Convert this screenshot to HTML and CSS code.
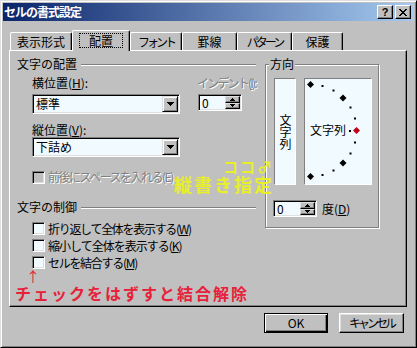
FILE: index.html
```html
<!DOCTYPE html>
<html lang="ja">
<head>
<meta charset="utf-8">
<title>セルの書式設定</title>
<link rel="stylesheet" href="styles.css">
</head>
<body>
<div class="window">
  <div class="titlebar">
    <span class="title">セルの書式設定</span>
    <div class="tbtns">
      <span class="tbtn help">?</span>
      <span class="tbtn close"><svg width="8" height="7" viewBox="0 0 8 7" shape-rendering="crispEdges"><path d="M0 0h2v1H0zM6 0h2v1H6zM1 1h2v1H1zM5 1h2v1H5zM2 2h4v1H2zM3 3h2v1H3zM2 4h4v1H2zM1 5h2v1H1zM5 5h2v1H5zM0 6h2v1H0zM6 6h2v1H6z" fill="#000"/></svg></span>
    </div>
  </div>
  <div class="content">
    <div class="tabs">
      <div class="tab t1">表示形式</div>
      <div class="tab t2 sel"><span class="focus">配置</span></div>
      <div class="tab t3"><span class="n-kana">フォント</span></div>
      <div class="tab t4">罫線</div>
      <div class="tab t5"><span class="n-kana">パターン</span></div>
      <div class="tab t6">保護</div>
    </div>
    <div class="panel">
      <div class="col-left">
        <div class="hdr"><span>文字の配置</span><span class="rule"></span></div>
        <div class="pos-row">
          <div class="pos-main">
            <div class="lbl">横位置(<u>H</u>):</div>
            <div class="combo"><span class="val">標準</span><span class="dd"><svg width="7" height="4" viewBox="0 0 7 4" shape-rendering="crispEdges"><path d="M0 0h7v1H0zM1 1h5v1H1zM2 2h3v1H2zM3 3h1v1H3z" fill="#000"/></svg></span></div>
          </div>
          <div class="pos-indent">
            <div class="lbl disabled n-indent">インデント(<u>I</u>):</div>
            <div class="spin indent"><span class="val">0</span><span class="sbtns"><span class="sbtn"><svg width="5" height="3" viewBox="0 0 5 3" shape-rendering="crispEdges"><path d="M2 0h1v1H2zM1 1h3v1H1zM0 2h5v1H0z" fill="#000"/></svg></span><span class="sbtn"><svg width="5" height="3" viewBox="0 0 5 3" shape-rendering="crispEdges"><path d="M0 0h5v1H0zM1 1h3v1H1zM2 2h1v1H2z" fill="#000"/></svg></span></span></div>
          </div>
        </div>
        <div class="lbl vlbl">縦位置(<u>V</u>):</div>
        <div class="combo vcombo"><span class="val">下詰め</span><span class="dd"><svg width="7" height="4" viewBox="0 0 7 4" shape-rendering="crispEdges"><path d="M0 0h7v1H0zM1 1h5v1H1zM2 2h3v1H2zM3 3h1v1H3z" fill="#000"/></svg></span></div>
        <div class="chk dis"><span class="box"></span><span class="disabled n-space">前後にスペースを入れる(E)</span></div>
        <div class="hdr hdr2"><span>文字の制御</span><span class="rule"></span></div>
        <div class="chks">
          <div class="chk"><span class="box"></span><span class="n-wrap">折り返して全体を表示する(<u>W</u>)</span></div>
          <div class="chk"><span class="box"></span><span class="n-shrink">縮小して全体を表示する(<u>K</u>)</span></div>
          <div class="chk"><span class="box"></span><span class="n-wrap">セルを結合する(<u>M</u>)</span></div>
        </div>
        <div class="arrow">↑</div>
        <div class="note-red">チェックをはずすと結合解除</div>
      </div>
      <div class="group">
        <span class="glabel">方向</span>
        <div class="orient">
          <div class="vbox"><span class="vtext">文字列</span></div>
          <div class="dial">
            <svg width="66" height="105" viewBox="0 0 66 105">
              <g fill="#000">
                <polygon points="5.5,2 9,5.5 5.5,9 2,5.5"/>
                <rect x="16.5" y="6" width="2" height="2"/>
                <rect x="27.5" y="10.5" width="2" height="2"/>
                <polygon points="38,15.5 41.5,19 38,22.5 34.5,19"/>
                <rect x="44.5" y="27.5" width="2" height="2"/>
                <rect x="49" y="38.5" width="2" height="2"/>
                <rect x="44" y="51" width="2" height="2"/>
                <rect x="49" y="62.5" width="2" height="2"/>
                <rect x="44.5" y="73.5" width="2" height="2"/>
                <polygon points="38,80.5 41.5,84 38,87.5 34.5,84"/>
                <rect x="27.5" y="90.5" width="2" height="2"/>
                <rect x="16.5" y="95" width="2" height="2"/>
                <polygon points="5.5,94 9,97.5 5.5,101 2,97.5"/>
              </g>
              <polygon points="51.5,48 55,51.5 51.5,55 48,51.5" fill="#c00018"/>
              <text x="5" y="56" font-family="Noto Sans CJK JP, sans-serif" font-size="12" fill="#000">文字列</text>
            </svg>
          </div>
        </div>
        <div class="deg">
          <div class="spin"><span class="val">0</span><span class="sbtns"><span class="sbtn"><svg width="5" height="3" viewBox="0 0 5 3" shape-rendering="crispEdges"><path d="M2 0h1v1H2zM1 1h3v1H1zM0 2h5v1H0z" fill="#000"/></svg></span><span class="sbtn"><svg width="5" height="3" viewBox="0 0 5 3" shape-rendering="crispEdges"><path d="M0 0h5v1H0zM1 1h3v1H1zM2 2h1v1H2z" fill="#000"/></svg></span></span></div>
          <span class="deg-lbl">度(<u>D</u>)</span>
        </div>
      </div>
    </div>
    <div class="actions">
      <div class="btn ok">OK</div>
      <div class="btn cancel"><span class="n-kana">キャンセル</span></div>
    </div>
  </div>
  <div class="note-yellow">
    <span class="koko">ココ♂</span>
    <span class="tate">縦書き指定</span>
  </div>
</div>
</body>
</html>
```
FILE: styles.css
```css
* { box-sizing: border-box; }
html, body { margin: 0; padding: 0; }
body {
  width: 417px;
  height: 348px;
  overflow: hidden;
  background: #c0c0c0;
  font-family: "Noto Sans CJK JP", "Noto Sans", sans-serif;
  font-size: 12px;
  line-height: 14px;
  color: #000;
}
u { text-underline-offset: 1px; }

.n-kana { letter-spacing: -3px; }
.n-indent { letter-spacing: -1.8px; }
.n-space { letter-spacing: -1.5px; }
.n-wrap { letter-spacing: -1.3px; }
.n-shrink { letter-spacing: -1px; }

.window {
  position: relative;
  width: 417px;
  height: 348px;
  background: #c0c0c0;
  border: 1px solid;
  border-color: #dfdfdf #000 #000 #dfdfdf;
  box-shadow: inset 1px 1px 0 #fff, inset -1px -1px 0 #808080;
  padding: 2px;
  display: flex;
  flex-direction: column;
}

.titlebar {
  flex: none;
  height: 18px;
  display: flex;
  align-items: center;
  justify-content: space-between;
  background: linear-gradient(to right, #0a246a, #a6caf0);
  padding: 0 3px 0 1px;
}
.title { color: #fff; font-weight: bold; font-size: 12px; line-height: 14px; letter-spacing: -1px; }
.tbtns { display: flex; gap: 2px; }
.tbtn {
  width: 16px;
  height: 14px;
  background: #c0c0c0;
  border: 1px solid;
  border-color: #fff #000 #000 #fff;
  box-shadow: inset -1px -1px 0 #808080;
  display: flex;
  align-items: center;
  justify-content: center;
}
.help {
  font-family: "Liberation Sans", sans-serif;
  font-weight: bold;
  font-size: 11px;
  line-height: 11px;
}

.content {
  flex: 1;
  display: flex;
  flex-direction: column;
  padding: 9px 7px 12px 6px;
}

.tabs {
  flex: none;
  display: flex;
  height: 20px;
  padding-left: 1px;
  position: relative;
  z-index: 1;
}
.tab {
  height: 18px;
  margin-top: 2px;
  background: #c0c0c0;
  border-left: 1px solid #fff;
  border-top: 1px solid #fff;
  border-right: 1px solid #000;
  border-radius: 2px 2px 0 0;
  box-shadow: inset -1px 0 0 #808080;
  display: flex;
  align-items: center;
  justify-content: center;
  white-space: nowrap;
}
.t1 { width: 62px; }
.t2 { width: 58px; }
.t3 { width: 52px; }
.t4 { width: 55px; }
.t5 { width: 55px; }
.t6 { width: 51px; }
.tab.sel {
  height: 21px;
  margin-top: 0;
  margin-bottom: -1px;
  padding-bottom: 1px;
}
.focus {
  border: 1px dotted #000;
  padding: 0 9px;
  line-height: 13px;
}

.panel {
  flex: none;
  width: 398px;
  height: 257px;
  border: 1px solid;
  border-color: #fff #000 #000 #fff;
  box-shadow: inset -1px -1px 0 #808080;
  display: flex;
  align-items: flex-start;
  gap: 9px;
  padding: 6px 0 0 7px;
}

.col-left {
  width: 239px;
  display: flex;
  flex-direction: column;
}
.hdr {
  display: flex;
  align-items: center;
  height: 14px;
  white-space: nowrap;
}
.hdr .rule {
  flex: 1;
  height: 2px;
  margin: 2px 0 0 4px;
  border-top: 1px solid #808080;
  border-bottom: 1px solid #fff;
}
.hdr2 { margin-top: 16px; }

.pos-row { display: flex; margin: 5px 0 0 15px; }
.pos-main { width: 148px; display: flex; flex-direction: column; }
.pos-indent { margin-left: 17px; display: flex; flex-direction: column; }
.lbl { height: 14px; line-height: 14px; white-space: nowrap; }
.vlbl { margin: 9px 0 0 15px; }
.disabled { color: #808080; text-shadow: 1px 1px 0 #fff; }

.combo {
  margin-top: 4px;
  width: 148px;
  height: 20px;
  background: #f0faff;
  border: 1px solid;
  border-color: #808080 #fff #fff #808080;
  box-shadow: inset 1px 1px 0 #000, inset -1px -1px 0 #dfdfdf;
  display: flex;
  align-items: center;
  padding: 1px 1px 1px 3px;
}
.vcombo { margin: 0 0 0 15px; }
.combo .val { flex: 1; line-height: 14px; }
.dd {
  width: 16px;
  height: 16px;
  background: #c0c0c0;
  border: 1px solid;
  border-color: #dfdfdf #000 #000 #dfdfdf;
  box-shadow: inset 1px 1px 0 #fff, inset -1px -1px 0 #808080;
  display: flex;
  align-items: center;
  justify-content: center;
}
.dd svg, .sbtn svg { display: block; }

.spin {
  width: 44px;
  height: 17px;
  background: #f0faff;
  border: 1px solid;
  border-color: #808080 #fff #fff #808080;
  box-shadow: inset 1px 1px 0 #000, inset -1px -1px 0 #dfdfdf;
  display: flex;
  padding: 1px;
}
.spin.indent { margin: 4px 0 0 1px; }
.spin .val { flex: 1; padding-left: 2px; line-height: 13px; }
.sbtns { width: 15px; display: flex; flex-direction: column; }
.sbtn {
  flex: 1;
  background: #c0c0c0;
  border: 1px solid;
  border-color: #dfdfdf #000 #000 #dfdfdf;
  box-shadow: inset -1px -1px 0 #808080;
  display: flex;
  align-items: center;
  justify-content: center;
}

.chk {
  display: flex;
  align-items: center;
  height: 17px;
  margin-left: 15px;
  white-space: nowrap;
}
.chk.dis { height: 14px; margin-top: 13px; }
.chks { margin-top: 6px; }
.box {
  flex: none;
  width: 13px;
  height: 13px;
  margin-right: 3px;
  background: #f0faff;
  border: 1px solid;
  border-color: #808080 #fff #fff #808080;
  box-shadow: inset 1px 1px 0 #000, inset -1px -1px 0 #dfdfdf;
}
.chk.dis .box { background: #c0c0c0; }

.arrow {
  color: #e8213a;
  font-size: 14px;
  line-height: 13px;
  height: 13px;
  margin: -1px 0 0 9px;
}
.note-red {
  color: #e8213a;
  font-weight: bold;
  font-size: 16px;
  line-height: 16px;
  letter-spacing: 2px;
  margin: 2px 0 0 -2px;
  white-space: nowrap;
}

.group {
  width: 114px;
  height: 164px;
  margin-top: 7px;
  border: 1px solid #808080;
  box-shadow: inset 1px 1px 0 #fff, 1px 1px 0 #fff;
  display: flex;
  flex-direction: column;
  align-items: flex-start;
}
.glabel {
  margin: -8px 0 0 3px;
  padding: 0 1px;
  background: #c0c0c0;
  line-height: 14px;
}
.orient { display: flex; gap: 8px; margin: 7px 0 0 8px; }
.vbox, .dial {
  height: 107px;
  background: #f0faff;
  border: 1px solid;
  border-color: #808080 #fff #fff #808080;
}
.vbox {
  width: 22px;
  display: flex;
  align-items: center;
  justify-content: center;
}
.vtext { writing-mode: vertical-rl; line-height: 12px; }
.dial { width: 68px; }
.dial svg { display: block; }
.deg { display: flex; align-items: center; margin: 15px 0 0 7px; }
.deg-lbl { margin-left: 5px; }

.actions {
  flex: none;
  display: flex;
  justify-content: flex-end;
  gap: 11px;
  height: 20px;
  margin-top: 6px;
  padding-right: 3px;
}
.btn {
  height: 20px;
  display: flex;
  align-items: center;
  justify-content: center;
  background: #c0c0c0;
  border: 1px solid;
  border-color: #fff #000 #000 #fff;
  box-shadow: inset -1px -1px 0 #808080, inset 1px 1px 0 #dfdfdf;
}
.btn.ok {
  width: 64px;
  border-color: #000;
  box-shadow: inset 1px 1px 0 #fff, inset -1px -1px 0 #000, inset -2px -2px 0 #808080;
}
.btn.cancel { width: 65px; }

.note-yellow {
  position: absolute;
  left: 173px;
  top: 158px;
  color: #e8ee2a;
  font-weight: bold;
  white-space: nowrap;
}
.koko {
  display: block;
  margin-left: 49px;
  font-size: 15px;
  line-height: 16px;
  letter-spacing: 2px;
}
.tate {
  display: block;
  font-size: 18px;
  line-height: 18px;
  letter-spacing: 2px;
}
```
